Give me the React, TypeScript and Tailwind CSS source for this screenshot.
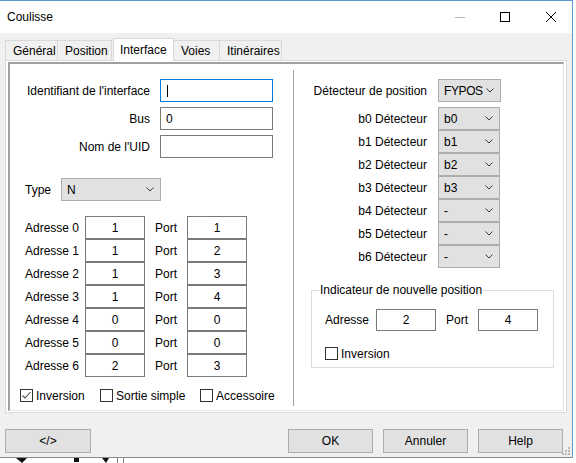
import React from 'react';

const addresses: [string, string][] = [
  ['1', '1'],
  ['1', '2'],
  ['1', '3'],
  ['1', '4'],
  ['0', '0'],
  ['0', '0'],
  ['2', '3'],
];

const detectors = ['b0', 'b1', 'b2', 'b3', '-', '-', '-'];

function Chevron() {
  return (
    <svg width="8" height="5" viewBox="0 0 8 5" className="shrink-0">
      <polyline points="0.5,0.5 4,4 7.5,0.5" fill="none" stroke="#3c3c3c" strokeWidth="1" />
    </svg>
  );
}

function Select({ value, w, tight }: { value: string; w: string; tight?: boolean }) {
  return (
    <div
      className={`${w} h-[23px] flex items-center justify-between pl-[5px] pr-[6px] bg-[#e1e1e1] border border-[#adadad]`}
    >
      <span className={tight ? 'tracking-[-0.4px]' : ''}>{value}</span>
      <Chevron />
    </div>
  );
}

function CheckBox({ checked, label }: { checked?: boolean; label: string }) {
  return (
    <div className="flex items-center">
      <span className="w-[13px] h-[13px] border border-[#333333] bg-white flex items-center justify-center">
        {checked && (
          <svg width="11" height="11" viewBox="0 0 11 11">
            <polyline points="1.5,5.5 4,8 9.5,2" fill="none" stroke="#4a4a4a" strokeWidth="1.1" />
          </svg>
        )}
      </span>
      <span className="ml-[3px]">{label}</span>
    </div>
  );
}

function NumBox({ value, h = 'h-[23px]' }: { value: string; h?: string }) {
  return (
    <div className={`w-[60px] ${h} border border-[#7a7a7a] bg-white flex items-center justify-center`}>
      {value}
    </div>
  );
}

function FieldRow({
  label,
  value,
  focused,
  className = '',
}: {
  label: string;
  value?: string;
  focused?: boolean;
  className?: string;
}) {
  return (
    <div className={`flex items-center pl-[15px] ${className}`}>
      <span className="w-[125px] text-right">{label}</span>
      <div
        className={`ml-[10px] w-[113px] h-[23px] bg-white border flex items-center pl-[5px] ${
          focused ? 'border-[#0078d7]' : 'border-[#7a7a7a]'
        }`}
      >
        {focused && <span className="w-px h-[12px] bg-black ml-px" />}
        {value}
      </div>
    </div>
  );
}

function Tab({ label, w, className = '' }: { label: string; w: string; className?: string }) {
  return (
    <div
      className={`${w} h-[20px] border border-b-0 border-[#d9d9d9] bg-[#f0f0f0] pl-[7px] pt-px flex items-center ${className}`}
    >
      {label}
    </div>
  );
}

function Button({ label, w = 'w-[85px]' }: { label: string; w?: string }) {
  return (
    <div className={`${w} h-[24px] bg-[#e1e1e1] border border-[#adadad] flex items-center justify-center`}>
      {label}
    </div>
  );
}

export default function App() {
  return (
    <div className="w-[576px] h-[463px] bg-white overflow-hidden font-['Liberation_Sans',Arial,sans-serif] text-[12px] text-black leading-none">
      <div className="relative w-[573px] h-[458px] bg-[#f0f0f0] border-t border-r border-b border-t-[#5b9bd5] border-r-[#5b9bd5] border-b-[#8c8c8c] flex flex-col">
        {/* title bar */}
        <div className="h-[32px] bg-white flex items-center pl-[7px] pr-[16px]">
          <span className="text-[12px]">Coulisse</span>
          <div className="ml-auto flex items-center">
            <svg width="10" height="10" viewBox="0 0 10 10">
              <line x1="0" y1="5.5" x2="10" y2="5.5" stroke="#b4b4b4" strokeWidth="1" />
            </svg>
            <svg width="10" height="10" viewBox="0 0 10 10" className="ml-[35px]">
              <rect x="0.5" y="0.5" width="9" height="9" fill="none" stroke="#000" strokeWidth="1" />
            </svg>
            <svg width="10" height="10" viewBox="0 0 10 10" className="ml-[36px]">
              <line x1="0" y1="0" x2="10" y2="10" stroke="#000" strokeWidth="1" />
              <line x1="10" y1="0" x2="0" y2="10" stroke="#000" strokeWidth="1" />
            </svg>
          </div>
        </div>

        {/* tabs */}
        <div className="mt-[5px] ml-[5px] h-[22px] flex items-end relative z-10">
          <Tab label="Général" w="w-[53px]" />
          <Tab label="Position" w="w-[55px]" className="-ml-px" />
          <div className="w-[61px] h-[23px] -mb-px ml-px bg-white border border-b-0 border-[#d9d9d9] pl-[6px] pt-[5px]">
            Interface
          </div>
          <Tab label="Voies" w="w-[47px]" className="-ml-px" />
          <Tab label="Itinéraires" w="w-[63px]" className="-ml-px" />
        </div>

        {/* tab panel */}
        <div className="ml-[5px] w-[562px] h-[353px] bg-white border border-[#d9d9d9] pt-px px-[2px] pb-px">
          <div className="h-full flex border-t-2 border-l-2 border-r border-b border-t-[#a0a0a0] border-l-[#a0a0a0] border-r-[#e3e3e3] border-b-[#e3e3e3]">
            {/* left column */}
            <div className="w-[283px] flex flex-col pt-[15px]">
              <FieldRow label="Identifiant de l'interface" focused />
              <FieldRow label="Bus" value="0" className="mt-[5px]" />
              <FieldRow label="Nom de l'UID" className="mt-[5px]" />

              <div className="flex items-center mt-[20px] pl-[15px]">
                <span className="w-[36px]">Type</span>
                <Select value="N" w="w-[100px]" />
              </div>

              <div className="mt-[15px] pl-[15px] flex flex-col">
                {addresses.map(([a, p], i) => (
                  <div key={i} className="flex items-center">
                    <span className="w-[60px]">Adresse {i}</span>
                    <NumBox value={a} />
                    <span className="w-[32px] ml-[10px]">Port</span>
                    <NumBox value={p} />
                  </div>
                ))}
              </div>

              <div className="mt-[12px] pl-[10px] flex items-center">
                <div className="w-[80px]">
                  <CheckBox checked label="Inversion" />
                </div>
                <div className="w-[100px]">
                  <CheckBox label="Sortie simple" />
                </div>
                <CheckBox label="Accessoire" />
              </div>
            </div>

            <div className="w-px bg-[#a0a0a0] mt-[6px] mb-[4px]" />

            {/* right column */}
            <div className="flex-1 flex flex-col pt-[15px]">
              <div className="flex items-center">
                <span className="w-[133px] text-right">Détecteur de position</span>
                <div className="ml-[11px]">
                  <Select value="FYPOS" w="w-[63px]" tight />
                </div>
              </div>
              <div className="mt-[5px] flex flex-col">
                {detectors.map((d, i) => (
                  <div key={i} className="flex items-center">
                    <span className="w-[133px] text-right">b{i} Détecteur</span>
                    <div className="ml-[11px]">
                      <Select value={d} w="w-[62px]" />
                    </div>
                  </div>
                ))}
              </div>

              <div className="relative mt-[22px] ml-[17px] w-[243px] h-[78px] border border-[#dcdcdc] pt-[18px] pl-[13px]">
                <span className="absolute -top-[8px] left-[7px] bg-white px-px leading-[14px]">
                  Indicateur de nouvelle position
                </span>
                <div className="flex items-center">
                  <span className="w-[51px]">Adresse</span>
                  <NumBox value="2" h="h-[22px]" />
                  <span className="w-[32px] ml-[10px]">Port</span>
                  <NumBox value="4" h="h-[22px]" />
                </div>
                <div className="mt-[16px]">
                  <CheckBox label="Inversion" />
                </div>
              </div>
            </div>
          </div>
        </div>

        {/* buttons */}
        <div className="mt-[16px] flex items-center pl-[5px] pr-[9px]">
          <Button label="</>" w="w-[86px]" />
          <div className="ml-auto flex gap-[10px]">
            <Button label="OK" />
            <Button label="Annuler" />
            <Button label="Help" />
          </div>
        </div>

        {/* resize grip */}
        <svg width="9" height="9" viewBox="0 0 9 9" className="absolute right-[2px] bottom-[2px]">
          <rect x="7" y="1" width="2" height="2" fill="#b8b8b8" />
          <rect x="4" y="4" width="2" height="2" fill="#b8b8b8" />
          <rect x="7" y="4" width="2" height="2" fill="#b8b8b8" />
          <rect x="1" y="7" width="2" height="2" fill="#b8b8b8" />
          <rect x="4" y="7" width="2" height="2" fill="#b8b8b8" />
          <rect x="7" y="7" width="2" height="2" fill="#b8b8b8" />
        </svg>
      </div>

      {/* desktop behind the window */}
      <svg width="576" height="5" viewBox="0 0 576 5" className="block">
        <polygon points="16,0 27,0 22,5" fill="#111" />
        <rect x="74" y="0" width="5" height="4" fill="#111" />
        <polygon points="102,0 109,0 106,5" fill="#111" />
        <rect x="117" y="0" width="1" height="5" fill="#888" />
        <rect x="123" y="0" width="1" height="5" fill="#888" />
      </svg>
    </div>
  );
}
